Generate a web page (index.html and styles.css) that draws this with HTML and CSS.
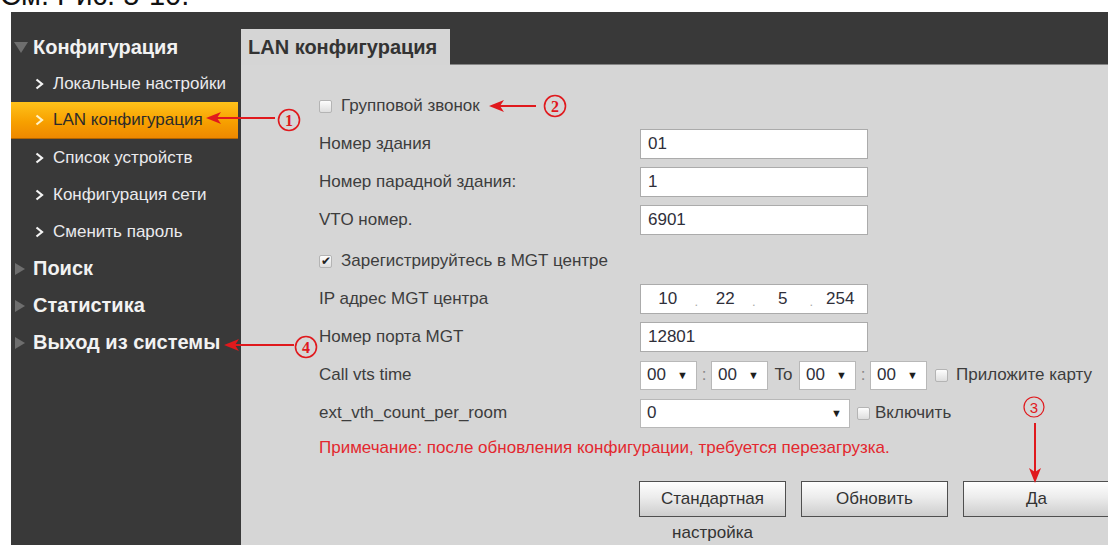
FILE: index.html
```html
<!DOCTYPE html>
<html lang="ru">
<head>
<meta charset="utf-8">
<title>LAN конфигурация</title>
<link rel="stylesheet" href="styles.css">
</head>
<body>
<div class="caption"><span>См. Рис. 5-10.</span></div>
<div class="app">
  <nav class="sidebar">
    <div class="group"><span class="tri down"></span>Конфигурация</div>
    <div class="item"><svg class="chev" viewBox="0 0 9 12"><polyline points="1.5,1.5 7,6 1.5,10.5"/></svg>Локальные настройки</div>
    <div class="item active"><svg class="chev" viewBox="0 0 9 12"><polyline points="1.5,1.5 7,6 1.5,10.5"/></svg>LAN конфигурация</div>
    <div class="item"><svg class="chev" viewBox="0 0 9 12"><polyline points="1.5,1.5 7,6 1.5,10.5"/></svg>Список устройств</div>
    <div class="item"><svg class="chev" viewBox="0 0 9 12"><polyline points="1.5,1.5 7,6 1.5,10.5"/></svg>Конфигурация сети</div>
    <div class="item"><svg class="chev" viewBox="0 0 9 12"><polyline points="1.5,1.5 7,6 1.5,10.5"/></svg>Сменить пароль</div>
    <div class="group"><span class="tri"></span>Поиск</div>
    <div class="group"><span class="tri"></span>Статистика</div>
    <div class="group"><span class="tri"></span>Выход из системы</div>
  </nav>
  <main class="main">
    <div class="topbar">
      <div class="tab">LAN конфигурация</div>
      <div class="topfill"></div>
    </div>
    <div class="content">
      <div class="row"><span class="cb"></span>Групповой звонок</div>
      <div class="row">
        <span class="label">Номер здания</span>
        <span class="field">01</span>
      </div>
      <div class="row">
        <span class="label">Номер парадной здания:</span>
        <span class="field">1</span>
      </div>
      <div class="row">
        <span class="label">VTO номер.</span>
        <span class="field">6901</span>
      </div>
      <div class="row gap-top"><span class="cb checked">✔</span>Зарегистрируйтесь в MGT центре</div>
      <div class="row">
        <span class="label">IP адрес MGT центра</span>
        <span class="field ip">
          <span class="oct">10</span><span class="dot">.</span>
          <span class="oct">22</span><span class="dot">.</span>
          <span class="oct">5</span><span class="dot">.</span>
          <span class="oct">254</span>
        </span>
      </div>
      <div class="row">
        <span class="label">Номер порта MGT</span>
        <span class="field">12801</span>
      </div>
      <div class="row">
        <span class="label">Call vts time</span>
        <span class="select small"><span>00</span><span class="caret">▼</span></span>
        <span class="sep">:</span>
        <span class="select small"><span>00</span><span class="caret">▼</span></span>
        <span class="to">To</span>
        <span class="select small"><span>00</span><span class="caret">▼</span></span>
        <span class="sep">:</span>
        <span class="select small"><span>00</span><span class="caret">▼</span></span>
        <span class="cb after"></span><span class="opt">Приложите карту</span>
      </div>
      <div class="row">
        <span class="label">ext_vth_count_per_room</span>
        <span class="select wide"><span>0</span><span class="caret">▼</span></span>
        <span class="cb tight"></span><span class="opt">Включить</span>
      </div>
      <div class="note">Примечание: после обновления конфигурации, требуется перезагрузка.</div>
      <div class="actions">
        <div class="btn">Стандартная настройка</div>
        <div class="btn">Обновить</div>
        <div class="btn">Да</div>
      </div>
    </div>
  </main>
</div>

<svg class="marks" width="1108" height="545" viewBox="0 0 1108 545">
  <g class="mark">
    <line x1="212" y1="118" x2="275" y2="118"/>
    <path class="head" d="M206 118 L221 112 L217 118 L221 124 Z"/>
    <circle cx="289" cy="120" r="10.5"/>
    <text x="289" y="125.5" class="num">1</text>
  </g>
  <g class="mark">
    <line x1="494" y1="106" x2="536" y2="106"/>
    <path class="head" d="M489 106 L504 100 L500 106 L504 112 Z"/>
    <circle cx="555" cy="106" r="10.5"/>
    <text x="555" y="111.5" class="num">2</text>
  </g>
  <g class="mark">
    <circle class="thin" cx="1034" cy="407" r="10"/>
    <text x="1034" y="412.5" class="num sans">3</text>
    <line x1="1035" y1="423" x2="1035" y2="477"/>
    <path class="head" d="M1035 483 L1029 468 L1035 472 L1041 468 Z"/>
  </g>
  <g class="mark">
    <line x1="229" y1="345" x2="294" y2="345"/>
    <path class="head" d="M224 345 L239 339 L235 345 L239 351 Z"/>
    <circle cx="306" cy="347" r="10.5"/>
    <text x="306" y="352.5" class="num">4</text>
  </g>
</svg>
</body>
</html>
```

FILE: styles.css
```css
html, body {
  margin: 0;
  padding: 0;
}

body {
  width: 1108px;
  height: 545px;
  overflow: hidden;
  background: #fff;
  font-family: "Liberation Sans", Arial, sans-serif;
  position: relative;
}

/* figure caption line above the screen */
.caption {
  height: 12px;
  overflow: hidden;
}
.caption span {
  display: block;
  font-size: 29px;
  line-height: 29px;
  margin-top: -19px;
  color: #111;
}

.app {
  display: flex;
  margin-left: 11px;
  height: 533px;
  background: #393939;
}

/* ---------- left navigation ---------- */
.sidebar {
  width: 230px;
  flex: none;
  padding-top: 17px;
  box-sizing: border-box;
}

.group {
  height: 37px;
  display: flex;
  align-items: center;
  color: #f2f2f2;
  font-weight: bold;
  font-size: 20px;
  white-space: nowrap;
}
.sidebar .group:first-child {
  height: 36px;
}

.tri {
  width: 0;
  height: 0;
  flex: none;
  margin: 0 8px 0 4px;
  border-left: 10px solid #6e6e6e;
  border-top: 6px solid transparent;
  border-bottom: 6px solid transparent;
}
.tri.down {
  margin: 0 5px 0 3px;
  border-left: 7px solid transparent;
  border-right: 7px solid transparent;
  border-top: 11px solid #6e6e6e;
  border-bottom: 0;
}

.item {
  height: 37px;
  display: flex;
  align-items: center;
  padding-left: 24px;
  font-size: 17px;
  color: #ebebee;
  white-space: nowrap;
}

.chev {
  width: 9px;
  height: 12px;
  margin-right: 9px;
  flex: none;
}
.chev polyline {
  fill: none;
  stroke: #f4f4f4;
  stroke-width: 2.2;
}

.item.active {
  margin-right: 3px;
  background: linear-gradient(#ffc21a, #f7a000 55%, #ee8800);
  border-bottom: 1px solid #b36400;
  box-sizing: border-box;
  color: #2b2b2b;
}
.item.active .chev polyline {
  stroke: #fff3c8;
}

/* ---------- main panel ---------- */
.main {
  flex: 1;
  display: flex;
  flex-direction: column;
  min-width: 0;
}

.topbar {
  height: 53px;
  flex: none;
  display: flex;
  align-items: flex-end;
}
.tab {
  width: 209px;
  height: 36px;
  box-sizing: border-box;
  padding-left: 7px;
  display: flex;
  align-items: center;
  background: #d5d5d5;
  color: #333;
  font-weight: bold;
  font-size: 20px;
  white-space: nowrap;
}
.topfill {
  flex: 1;
  align-self: stretch;
  border-bottom: 1px solid #858585;
}

.content {
  flex: 1;
  background: #d6d6d6;
  padding: 22px 0 0 78px;
  color: #3d3d3d;
  font-size: 17px;
}

.row {
  height: 38px;
  display: flex;
  align-items: center;
  white-space: nowrap;
}
.row.gap-top {
  margin-top: 3px;
}

.label {
  width: 321px;
  flex: none;
}

.field {
  width: 228px;
  height: 30px;
  box-sizing: border-box;
  border: 1px solid #ababab;
  background: #fff;
  padding-left: 7px;
  display: flex;
  align-items: center;
  color: #2f2f3a;
}
.field.ip {
  padding: 0;
}
.oct {
  flex: 1;
  text-align: center;
}
.dot {
  width: 4px;
  color: #aaa;
  font-size: 13px;
  padding-top: 4px;
}

/* checkboxes */
.cb {
  width: 13px;
  height: 13px;
  box-sizing: border-box;
  border: 1px solid #b4b4b4;
  border-radius: 2px;
  background: linear-gradient(#fdfdfd, #dedede);
  margin-right: 9px;
  flex: none;
  display: flex;
  align-items: center;
  justify-content: center;
  font-size: 12px;
  line-height: 1;
  color: #222;
}
.cb.after {
  margin-left: 8px;
  margin-right: 8px;
}
.cb.tight {
  margin-left: 7px;
  margin-right: 5px;
}

.opt {
  color: #3d3d3d;
}

/* drop-downs */
.select {
  height: 29px;
  box-sizing: border-box;
  border: 1px solid #b8b8b8;
  background: #fff;
  display: flex;
  align-items: center;
  justify-content: space-between;
  padding: 0 8px 0 6px;
  color: #2f2f3a;
}
.select.small {
  width: 57px;
}
.select.wide {
  width: 210px;
  padding-right: 7px;
}
.caret {
  font-size: 11px;
  color: #1e1e1e;
}
.sep {
  width: 14px;
  text-align: center;
  color: #888;
}
.to {
  width: 31px;
  text-align: center;
}

.note {
  height: 32px;
  display: flex;
  align-items: center;
  color: #e3282f;
  white-space: nowrap;
}

.actions {
  margin-top: 17px;
  padding-left: 320px;
  display: flex;
  gap: 15px;
}
.btn {
  width: 147px;
  height: 36px;
  flex: none;
  box-sizing: border-box;
  border: 1px solid #4f4f4f;
  background: linear-gradient(#fefefe, #ececec 45%, #cdcdcd);
  text-align: center;
  line-height: 34px;
  color: #333;
}

/* annotation overlay */
.marks {
  position: absolute;
  left: 0;
  top: 0;
  pointer-events: none;
}
.mark line {
  stroke: #e0191d;
  stroke-width: 2;
}
.mark .head {
  fill: #e0191d;
}
.mark circle {
  fill: none;
  stroke: #e0191d;
  stroke-width: 1.6;
}
.mark circle.thin {
  stroke-width: 1.2;
}
.mark .num {
  fill: #e0191d;
  font-family: "Liberation Serif", "Times New Roman", serif;
  font-weight: bold;
  font-size: 16px;
  text-anchor: middle;
}
.mark .num.sans {
  font-family: "Liberation Sans", Arial, sans-serif;
  font-weight: normal;
  font-size: 15px;
}
```
